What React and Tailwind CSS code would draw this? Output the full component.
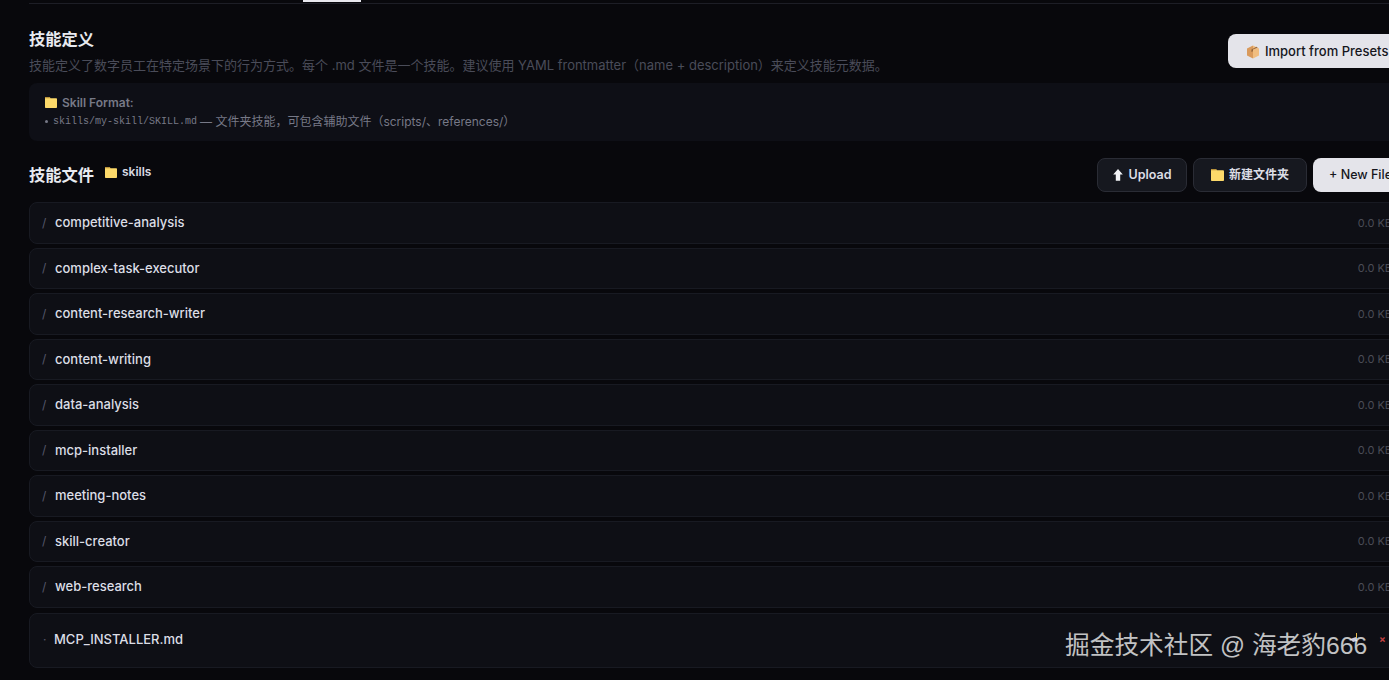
const SANS = { fontFamily: 'Inter, "Noto Sans CJK SC", sans-serif' };

const rows = [
  'competitive-analysis',
  'complex-task-executor',
  'content-research-writer',
  'content-writing',
  'data-analysis',
  'mcp-installer',
  'meeting-notes',
  'skill-creator',
  'web-research',
];

function Folder({ className }) {
  return (
    <svg viewBox="0 0 12 11" preserveAspectRatio="none" className={className}>
      <path d="M0 1C0 .4 .4 0 1 0H4.4L5.6 1.2H11C11.6 1.2 12 1.6 12 2.2V10C12 10.6 11.6 11 11 11H1C.4 11 0 10.6 0 10Z" fill="#fcd96a" />
      <path d="M0 1C0 .4 .4 0 1 0H4.4L5.6 1.2H0Z" fill="#b8913a" />
    </svg>
  );
}

function Box() {
  return (
    <svg viewBox="0 0 14 14" className="w-[14px] h-[14px]">
      <path d="M7 .6 L13 3.4 V10.6 L7 13.4 Z" fill="#f0bd80" />
      <path d="M7 .6 L1 3.4 V10.6 L7 13.4 Z" fill="#d99a5c" />
      <path d="M10.4 1.8 L5.4 4.4 V7 L7 6.2 V4.6 L11.8 2.4 Z" fill="#96683f" />
    </svg>
  );
}

function UpArrow() {
  return (
    <svg viewBox="0 0 10 12" className="w-[10px] h-[12px]">
      <path d="M5 0 L9.8 5.6 H7.2 V11.8 H2.8 V5.6 H.2 Z" fill="#f2f3f7" />
    </svg>
  );
}

function Row({ name }) {
  return (
    <div className="h-[41.5px] mb-[4px] flex items-center pl-[12px] pr-[27px] rounded-lg border border-[#181a22] bg-[#0e0f15]">
      <span className="w-[13px] text-[12px] text-[#55576a]">/</span>
      <span className="text-[13px] font-medium text-[#dcdee6]">{name}</span>
      <span className="ml-auto text-[11px] text-[#4b4c56]">0.0 KB</span>
    </div>
  );
}

export default function App() {
  return (
    <div className="relative w-[1389px] h-[680px] overflow-hidden bg-[#08080c]" style={SANS}>
      <div className="w-[1420px] pl-[29px]">
        {/* tab strip */}
        <div className="h-[4px] border-b border-[#1d1e26] relative">
          <div className="absolute left-[274px] top-0 w-[58px] h-[2px] bg-[#e8e8ee]"></div>
        </div>

        <div className="flex items-start justify-between pt-[24px] h-[79px] pr-[2px]">
          <div>
            <h2 className="text-[16.25px] leading-[22px] font-bold text-[#e8eaf0]">技能定义</h2>
            <p className="mt-[7px] text-[13px] leading-[16px] text-[#4a4c59]">
              技能定义了数字员工在特定场景下的行为方式。每个 .md 文件是一个技能。建议使用 YAML frontmatter（name + description）来定义技能元数据。
            </p>
          </div>
          <button className="mt-[6px] w-[190px] h-[34px] flex items-center pl-[18px] pt-[1px] gap-[5px] rounded-lg bg-[#e4e4ea] text-[13px] font-medium text-[#15161c]">
            <Box />
            Import from Presets
          </button>
        </div>

        <div className="h-[58px] rounded-lg bg-[#0e0f16] pl-[16px] pt-[12px]">
          <div className="flex items-center gap-[5px] text-[12px] leading-[15px] font-semibold text-[#777987]">
            <Folder className="w-[12px] h-[11px]" />
            Skill Format:
          </div>
          <div className="mt-[4px] flex items-center text-[12px] leading-[15px] text-[#777987]">
            <span className="w-[3px] h-[3px] mr-[5px] rounded-full bg-[#777987]"></span>
            <span className="text-[10px]" style={{ fontFamily: '"Liberation Mono", monospace' }}>skills/my-skill/SKILL.md</span>
            <span className="ml-[3px]">— 文件夹技能，可包含辅助文件（scripts/、references/）</span>
          </div>
        </div>

        <div className="flex items-start justify-between h-[61px] pt-[17px] pr-[2px]">
          <div className="flex items-start gap-[11px] pt-[6px]">
            <h2 className="text-[16.25px] leading-[22px] font-bold text-[#e8eaf0]">技能文件</h2>
            <div className="flex items-center gap-[5px] text-[12px] leading-[16px] font-semibold text-[#d8dae2]">
              <Folder className="w-[12px] h-[11px]" />
              skills
            </div>
          </div>
          <div className="flex items-center gap-[6px]">
            <button className="w-[90px] h-[34px] flex items-center justify-center gap-[6px] rounded-lg border border-[#2a2c35] bg-[#16181f] text-[12.5px] font-semibold text-[#dcdee6]">
              <UpArrow />
              Upload
            </button>
            <button className="w-[114px] h-[34px] flex items-center justify-center gap-[5px] rounded-lg border border-[#2a2c35] bg-[#16181f] text-[12px] font-semibold text-[#dcdee6]">
              <Folder className="w-[13px] h-[12px]" />
              新建文件夹
            </button>
            <button className="w-[105px] h-[34px] flex items-center pl-[16px] rounded-lg bg-[#e4e4ea] text-[12.5px] font-medium text-[#15161c]">
              + New File
            </button>
          </div>
        </div>

        <div>
          {rows.map((name) => (
            <Row key={name} name={name} />
          ))}
          <div className="h-[55px] mt-[5px] flex items-center pl-[13px] pr-[12px] rounded-lg border border-[#181a22] bg-[#0e0f15]">
            <span className="w-[11px] text-[12px] leading-none text-[#55576a]">·</span>
            <span className="text-[13px] font-medium text-[#dcdee6]">MCP_INSTALLER.md</span>
            <span className="absolute left-[1379px] top-[632px] text-[10px] font-bold text-[#c04040]">×</span>
          </div>
        </div>
      </div>

      {/* small action icon under the watermark */}
      <svg viewBox="0 0 10 12" className="absolute left-[1349px] top-[633px] w-[10px] h-[12px]">
        <path d="M7 0 L8 0 L8 6 L7 6 Z" fill="#e8b84a" />
        <path d="M1 6 L7 4 L8 8 L4 9 Z" fill="#c9cce0" />
      </svg>

      {/* juejin watermark */}
      <div className="absolute left-[1065px] top-[629px] text-[24.7px] leading-[34px] whitespace-nowrap text-white/75" style={{ fontFamily: '"Liberation Sans", "Noto Sans CJK SC", sans-serif' }}>
        掘金技术社区 @ 海老豹666
      </div>
    </div>
  );
}
